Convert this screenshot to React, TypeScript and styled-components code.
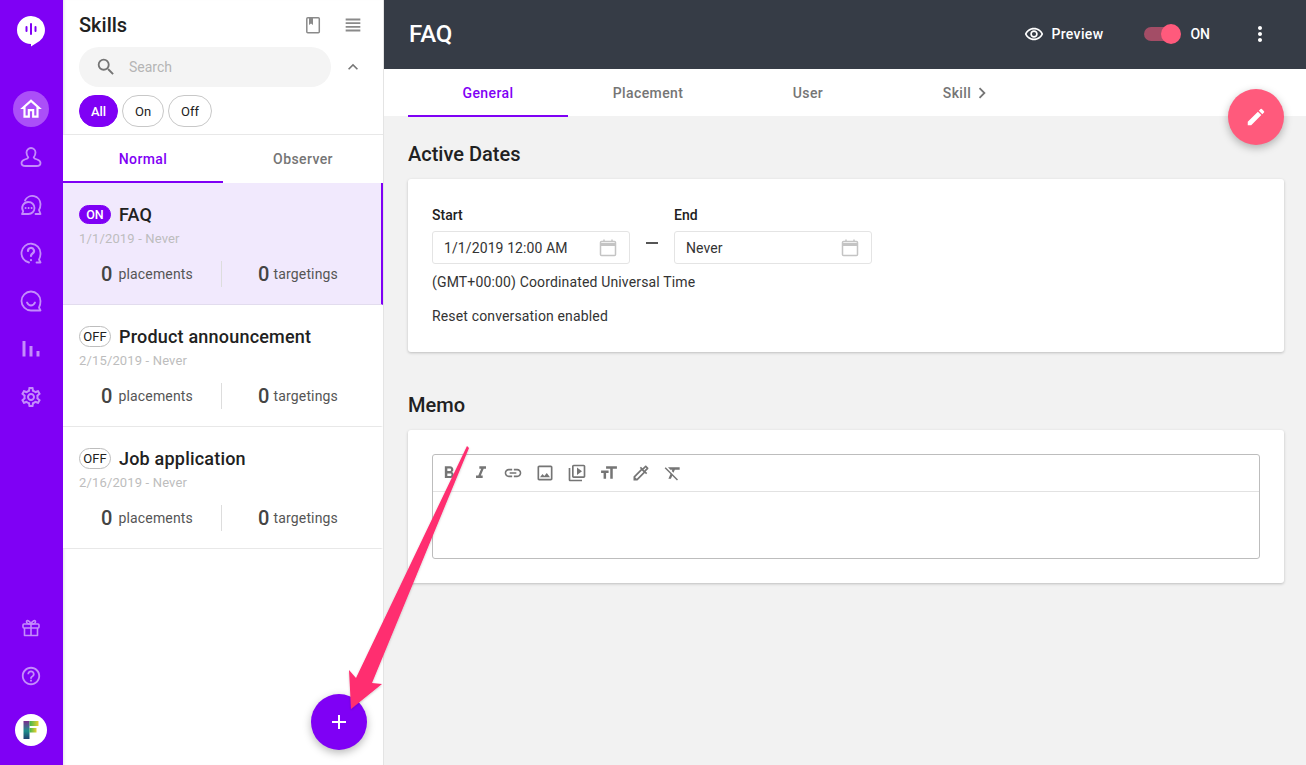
import React from 'react'
import styled, { createGlobalStyle } from 'styled-components'
import {
    MdOutlineRemoveRedEye, MdMoreVert, MdEdit, MdAdd, MdSearch, MdExpandLess, MdChevronRight,
    MdFormatBold, MdFormatItalic, MdLink, MdOutlinePhoto, MdOutlineVideoLibrary, MdTextFields,
    MdOutlineColorize, MdFormatClear, MdHelpOutline, MdOutlineSettings,
    MdOutlineHome, MdViewHeadline,
} from 'react-icons/md'

const PURPLE = '#7f00f5'
const PINK = '#ff5a7c'

const GlobalStyle = createGlobalStyle`
    html, body { margin: 0; padding: 0; height: 100%; }
    body { font-family: Roboto, "Liberation Sans", sans-serif; color: #212121; background: #f2f2f2; }
    #root { height: 100%; }
    * { box-sizing: border-box; }
`

const Page = styled.div`
    position: relative;
    display: flex;
    width: 100%;
    height: 100vh;
    overflow: hidden;
`

const Rail = styled.nav`
    width: 63px;
    flex-shrink: 0;
    background: ${PURPLE};
    display: flex;
    flex-direction: column;
    align-items: center;
    padding: 0 1px 19px 0;
`

const RailLogo = styled.div`
    height: 91px;
    padding-top: 15px;
    display: flex;
    justify-content: center;
`

const RailGroup = styled.div`
    display: flex;
    flex-direction: column;
    align-items: center;
    gap: 12px;
`

const RailSpacer = styled.div`
    flex: 1;
`

const RailButton = styled.div<{ $active?: boolean }>`
    width: 36px;
    height: 36px;
    border-radius: 50%;
    display: flex;
    align-items: center;
    justify-content: center;
    color: ${p => (p.$active ? '#fff' : '#c48cfb')};
    background: ${p => (p.$active ? '#ab4ff8' : 'transparent')};
`

const Avatar = styled.div`
    width: 32px;
    height: 32px;
    margin-top: 20px;
    border-radius: 50%;
    background: #fff;
    display: flex;
    align-items: center;
    justify-content: center;
`

const Panel = styled.section`
    position: relative;
    width: 321px;
    flex-shrink: 0;
    background: #fff;
    border-right: 1px solid #e4e4e4;
    box-shadow: inset 3px 0 3px -2px rgba(0, 0, 0, 0.1);
`

const PanelHead = styled.div`
    height: 135px;
    padding: 0 16px;
    border-bottom: 1px solid #e8e8e8;
`

const TitleRow = styled.div`
    height: 47px;
    display: flex;
    align-items: center;
    justify-content: space-between;
    padding: 4px 0 0;
    > h2 {
        margin: 0;
        font-size: 20px;
        font-weight: 500;
        position: relative;
        top: -1px;
    }
`

const TitleIcons = styled.div`
    display: flex;
    align-items: center;
    gap: 20px;
    color: #8a8a8a;
    margin-right: 3px;
    position: relative;
    top: -1px;
`

const SearchRow = styled.div`
    display: flex;
    align-items: center;
    gap: 12px;
    color: #777;
`

const SearchBox = styled.div`
    width: 252px;
    height: 40px;
    border-radius: 20px;
    background: #f4f4f4;
    display: flex;
    align-items: center;
    padding-left: 16px;
    gap: 12px;
    font-size: 14px;
    color: #b5b5b5;
`

const Chips = styled.div`
    display: flex;
    gap: 4px;
    margin-top: 8px;
`

const Chip = styled.div<{ $active?: boolean; $w: number }>`
    width: ${p => p.$w}px;
    height: 32px;
    border-radius: 16px;
    font-size: 13px;
    display: flex;
    align-items: center;
    justify-content: center;
    color: ${p => (p.$active ? '#fff' : '#212121')};
    background: ${p => (p.$active ? PURPLE : '#fff')};
    font-weight: ${p => (p.$active ? 500 : 400)};
    border: 1px solid ${p => (p.$active ? PURPLE : '#c8c8c8')};
`

const TabRow = styled.div`
    display: flex;
    background: #fff;
`

const Tab = styled.div<{ $active?: boolean; $w: number; $h: number }>`
    width: ${p => p.$w}px;
    height: ${p => p.$h}px;
    padding-top: 2px;
    display: flex;
    align-items: center;
    justify-content: center;
    font-size: 14px;
    font-weight: 500;
    letter-spacing: 0.4px;
    color: ${p => (p.$active ? PURPLE : '#757575')};
    border-bottom: 2px solid ${p => (p.$active ? PURPLE : 'transparent')};
`

const Item = styled.div<{ $active?: boolean }>`
    height: 122px;
    padding: 20px 16px 0;
    background: ${p => (p.$active ? '#f1e9fd' : '#fff')};
    border-bottom: 1px solid ${p => (p.$active ? '#e2dcee' : '#e8e8e8')};
    border-right: 2px solid ${p => (p.$active ? PURPLE : 'transparent')};
`

const ItemTitle = styled.div`
    display: flex;
    align-items: center;
    gap: 8px;
    height: 22px;
    font-size: 18px;
    font-weight: 500;
    letter-spacing: 0.2px;
`

const Badge = styled.span<{ $on?: boolean }>`
    width: 32px;
    height: ${p => (p.$on ? 19 : 21)}px;
    border-radius: 11px;
    font-size: ${p => (p.$on ? 12.5 : 13)}px;
    letter-spacing: 0;
    font-weight: ${p => (p.$on ? 500 : 400)};
    display: flex;
    align-items: center;
    justify-content: center;
    color: ${p => (p.$on ? '#fff' : '#212121')};
    background: ${p => (p.$on ? PURPLE : '#fff')};
    border: 1px solid ${p => (p.$on ? PURPLE : '#bdbdbd')};
`

const ItemDate = styled.div`
    margin-top: 6px;
    font-size: 13px;
    line-height: 16px;
    letter-spacing: 0.15px;
    color: #bdbdbd;
`

const Stats = styled.div`
    display: flex;
    margin-top: 14px;
    margin-left: -16px;
    width: 320px;
`

const Stat = styled.div<{ $first?: boolean }>`
    width: 159px;
    height: 26px;
    padding-left: ${p => (p.$first ? '38px' : '36px')};
    display: flex;
    align-items: center;
    gap: ${p => (p.$first ? '6px' : '4px')};
    font-size: 14px;
    letter-spacing: 0.15px;
    color: #555;
    border-right: ${p => (p.$first ? '1px solid #ddd' : 'none')};
    > b {
        font-size: 20px;
        font-weight: 500;
        color: #444;
    }
`

const Fab = styled.div<{ $color: string }>`
    position: absolute;
    width: 56px;
    height: 56px;
    border-radius: 50%;
    background: ${p => p.$color};
    color: #fff;
    display: flex;
    align-items: center;
    justify-content: center;
    box-shadow: 0 3px 8px rgba(0, 0, 0, 0.28);
`

const AddFab = styled(Fab)`
    right: 16px;
    bottom: 15px;
`

const EditFab = styled(Fab)`
    top: 89px;
    right: 22px;
`

const Main = styled.main`
    position: relative;
    flex: 1;
    min-width: 0;
    background: #f2f2f2;
`

const TopBar = styled.header`
    height: 69px;
    background: #363c46;
    color: #fff;
    display: flex;
    align-items: center;
    padding: 0 34px 1px 25px;
    > h1 {
        margin: 0 0 1px;
        font-size: 24px;
        font-weight: 500;
        flex: 1;
    }
`

const Preview = styled.div`
    display: flex;
    align-items: center;
    gap: 7px;
    font-size: 14px;
    font-weight: 500;
    letter-spacing: 0.35px;
    margin-right: 41px;
`

const Toggle = styled.div`
    position: relative;
    width: 34px;
    height: 14px;
    border-radius: 7px;
    background: #a34d66;
    margin-right: 12px;
    &::after {
        content: '';
        position: absolute;
        right: -3px;
        top: -3px;
        width: 20px;
        height: 20px;
        border-radius: 50%;
        background: ${PINK};
    }
`

const OnLabel = styled.span`
    font-size: 14px;
    font-weight: 500;
    margin-right: 38px;
`

const MainTabs = styled(TabRow)`
    padding-left: 24px;
    height: 47px;
`

const Content = styled.div`
    padding: 0 22px 0 24px;
`

const Heading = styled.h3<{ $top: number; $bottom: number }>`
    margin: ${p => p.$top}px 0 ${p => p.$bottom}px;
    font-size: 20px;
    line-height: 26px;
    font-weight: 500;
`

const Card = styled.div<{ $h: number }>`
    height: ${p => p.$h}px;
    background: #fff;
    border-radius: 3px;
    box-shadow: 0 1px 3px rgba(0, 0, 0, 0.22);
    padding: 24px;
`

const DateRow = styled.div`
    display: flex;
    align-items: flex-end;
    gap: 16px;
`

const DateField = styled.div`
    width: 198px;
    > label {
        display: block;
        font-size: 14px;
        line-height: 16px;
        font-weight: 500;
        margin: 4px 0 8px;
    }
`

const DateInput = styled.div`
    height: 33px;
    border: 1px solid #e4e4e4;
    border-radius: 3px;
    padding: 0 11px;
    display: flex;
    align-items: center;
    justify-content: space-between;
    font-size: 14px;
    letter-spacing: 0.1px;
    color: #333;
`

const Dash = styled.div`
    width: 12px;
    height: 2px;
    background: #555;
    margin-bottom: 20px;
`

const Note = styled.p<{ $top: number }>`
    margin: ${p => p.$top}px 0 0;
    font-size: 14px;
    line-height: 18px;
    letter-spacing: 0.15px;
    color: #333;
`

const Editor = styled.div`
    height: 105px;
    border: 1px solid #bdbdbd;
    border-radius: 3px;
`

const EditorBar = styled.div`
    height: 37px;
    border-bottom: 1px solid #e2e2e2;
    display: flex;
    align-items: center;
    gap: 12px;
    padding-left: 6px;
    color: #757575;
`

const TextSizeIcon = styled(MdTextFields)`
    transform: scaleX(-1);
`

const Arrow = styled.svg`
    position: absolute;
    left: 0;
    top: 0;
    width: 1306px;
    height: 765px;
    pointer-events: none;
`

const skills = [
    { name: 'FAQ', dates: '1/1/2019 - Never', on: true },
    { name: 'Product announcement', dates: '2/15/2019 - Never', on: false },
    { name: 'Job application', dates: '2/16/2019 - Never', on: false },
]

const LogoIcon = () => (
    <svg width="30" height="32" viewBox="0 0 30 32">
        <path d="M15 1a14 14 0 0 1 8.6 25L15 31.5 15 29A14 14 0 0 1 15 1z" fill="#fff" />
        <g stroke={PURPLE} strokeWidth="2" strokeLinecap="round">
            <path d="M15 9v10M10.5 12v4M19.5 12v4" />
        </g>
    </svg>
)

const iconProps = { width: 22, height: 22, viewBox: '0 0 22 22', fill: 'none', stroke: 'currentColor', strokeWidth: 1.8, strokeLinejoin: 'round' as const, strokeLinecap: 'round' as const }

const PersonIcon = () => (
    <svg {...iconProps}>
        <path d="M11 2a4.500 4.500 0 0 0-4.500 4.500c0 2 .8 3.600 1.800 5-.3 1-1.800 1.500-3.500 2C3 14.200 1.500 15.300 1.500 17c0 2 2 3 4 3h11c2 0 4-1 4-3 0-1.700-1.500-2.800-3.300-3.500-1.700-.5-3.200-1-3.500-2 1-1.400 1.800-3 1.800-5A4.500 4.500 0 0 0 11 2z" />
    </svg>
)

const ChatsIcon = () => (
    <svg {...iconProps}>
        <path d="M5 6.500A8.200 8.200 0 0 1 20.500 10c0 2.400-.5 4.400-1.500 6l1.500 4h-5" />
        <path d="M8.500 8a6 6 0 1 1 0 12H2l1.200-2.700A6 6 0 0 1 8.500 8z" />
        <path d="M5.500 14h.2M8.500 14h.2M11.500 14h.2" />
    </svg>
)

const QuestionIcon = () => (
    <svg {...iconProps}>
        <path d="M9 20.500A9.500 9.500 0 1 1 20.500 11c0 2.500-.5 5-1.500 6.500l1.500 3h-4" />
        <path d="M8 9a3 3 0 1 1 4.500 2.500c-1 .6-1.500 1.200-1.500 2.500M11 18v.2" strokeWidth="2.200" />
    </svg>
)

const SmileIcon = () => (
    <svg {...iconProps}>
        <path d="M11 20.500A9.500 9.500 0 1 1 20.500 11c0 2.500-.5 5-1.500 6.500l1.500 3z" />
        <path d="M7 12.500c1 2 2.500 3 4 3s3-1 4-3" />
    </svg>
)

const BarsIcon = () => (
    <svg width="22" height="22" viewBox="0 0 22 22" fill="currentColor">
        <rect x="2.500" y="3" width="3" height="15.500" />
        <rect x="9.500" y="8" width="3" height="10.500" />
        <rect x="16.500" y="13" width="3" height="5.500" />
    </svg>
)

const GiftIcon = () => (
    <svg width="20" height="20" viewBox="0 0 20 20" fill="none" stroke="currentColor" strokeWidth="1.600" strokeLinejoin="round">
        <rect x="2" y="6" width="16" height="4" rx="1" />
        <path d="M3.500 10v7.500h13V10M10 6v11.500" />
        <path d="M10 6C8 6 5.500 5.500 5.500 3.700 5.500 2 8.500 2 10 6zM10 6c2 0 4.500-.5 4.500-2.300C14.500 2 11.500 2 10 6z" />
    </svg>
)

const BookIcon = () => (
    <svg width="18" height="20" viewBox="0 0 18 20" fill="none" stroke="currentColor" strokeWidth="1.500">
        <rect x="2.800" y="2.800" width="12.500" height="15" rx="1" />
        <path d="M5 3v7l2-1.500L9 10V3" fill="currentColor" stroke="none" />
    </svg>
)

const CalendarIcon = () => (
    <svg width="20" height="20" viewBox="0 0 20 20" fill="none" stroke="#c4c4c4" strokeWidth="1.500">
        <rect x="2.500" y="3.500" width="15" height="14" rx="1" />
        <path d="M2.500 6.500h15" strokeWidth="3" />
        <path d="M6 1.500v2M14 1.500v2" />
    </svg>
)

const FLogo = () => (
    <svg width="18" height="20" viewBox="0 0 18 20">
        <defs>
            <linearGradient id="stem" x1="0" y1="0" x2="0" y2="1">
                <stop offset="0" stopColor="#7b2d8e" />
                <stop offset="0.55" stopColor="#1d8f8c" />
                <stop offset="1" stopColor="#22406f" />
            </linearGradient>
            <linearGradient id="bar" x1="0" y1="0" x2="1" y2="0">
                <stop offset="0" stopColor="#3fb54f" />
                <stop offset="1" stopColor="#e8d02e" />
            </linearGradient>
        </defs>
        <rect x="1.500" y="1" width="6" height="18" fill="url(#stem)" />
        <rect x="7.500" y="1" width="9" height="5" fill="url(#bar)" />
        <rect x="7.500" y="8" width="7" height="4.500" fill="url(#bar)" />
    </svg>
)

const App: React.FC = () => {
    return (
        <Page>
            <GlobalStyle />
            <Rail>
                <RailLogo><LogoIcon /></RailLogo>
                <RailGroup>
                    <RailButton $active><MdOutlineHome size={26} /></RailButton>
                    <RailButton><PersonIcon /></RailButton>
                    <RailButton><ChatsIcon /></RailButton>
                    <RailButton><QuestionIcon /></RailButton>
                    <RailButton><SmileIcon /></RailButton>
                    <RailButton><BarsIcon /></RailButton>
                    <RailButton><MdOutlineSettings size={24} /></RailButton>
                </RailGroup>
                <RailSpacer />
                <RailGroup>
                    <RailButton><GiftIcon /></RailButton>
                    <RailButton><MdHelpOutline size={22} /></RailButton>
                </RailGroup>
                <Avatar><FLogo /></Avatar>
            </Rail>

            <Panel>
                <PanelHead>
                    <TitleRow>
                        <h2>Skills</h2>
                        <TitleIcons>
                            <BookIcon />
                            <MdViewHeadline size={22} />
                        </TitleIcons>
                    </TitleRow>
                    <SearchRow>
                        <SearchBox>
                            <MdSearch size={22} color="#757575" />
                            Search
                        </SearchBox>
                        <MdExpandLess size={20} />
                    </SearchRow>
                    <Chips>
                        <Chip $active $w={39}>All</Chip>
                        <Chip $w={42}>On</Chip>
                        <Chip $w={44}>Off</Chip>
                    </Chips>
                </PanelHead>
                <TabRow>
                    <Tab $active $w={160} $h={48}>Normal</Tab>
                    <Tab $w={160} $h={48}>Observer</Tab>
                </TabRow>
                {skills.map(skill => (
                    <Item key={skill.name} $active={skill.on}>
                        <ItemTitle>
                            <Badge $on={skill.on}>{skill.on ? 'ON' : 'OFF'}</Badge>
                            {skill.name}
                        </ItemTitle>
                        <ItemDate>{skill.dates}</ItemDate>
                        <Stats>
                            <Stat $first><b>0</b> placements</Stat>
                            <Stat><b>0</b> targetings</Stat>
                        </Stats>
                    </Item>
                ))}
                <AddFab $color={PURPLE}><MdAdd size={24} /></AddFab>
            </Panel>

            <Main>
                <TopBar>
                    <h1>FAQ</h1>
                    <Preview><MdOutlineRemoveRedEye size={20} /> Preview</Preview>
                    <Toggle />
                    <OnLabel>ON</OnLabel>
                    <MdMoreVert size={24} />
                </TopBar>
                <MainTabs>
                    <Tab $active $w={160} $h={48}>General</Tab>
                    <Tab $w={160} $h={48}>Placement</Tab>
                    <Tab $w={160} $h={48}>User</Tab>
                    <Tab $w={160} $h={48}>Skill <MdChevronRight size={22} /></Tab>
                </MainTabs>
                <EditFab $color={PINK}><MdEdit size={22} /></EditFab>
                <Content>
                    <Heading $top={25} $bottom={12}>Active Dates</Heading>
                    <Card $h={173}>
                        <DateRow>
                            <DateField>
                                <label>Start</label>
                                <DateInput>1/1/2019 12:00 AM <CalendarIcon /></DateInput>
                            </DateField>
                            <Dash />
                            <DateField>
                                <label>End</label>
                                <DateInput>Never <CalendarIcon /></DateInput>
                            </DateField>
                        </DateRow>
                        <Note $top={9}>(GMT+00:00) Coordinated Universal Time</Note>
                        <Note $top={16}>Reset conversation enabled</Note>
                    </Card>
                    <Heading $top={40} $bottom={12}>Memo</Heading>
                    <Card $h={153}>
                        <Editor>
                            <EditorBar>
                                <MdFormatBold size={20} />
                                <MdFormatItalic size={20} />
                                <MdLink size={20} />
                                <MdOutlinePhoto size={20} />
                                <MdOutlineVideoLibrary size={20} />
                                <TextSizeIcon size={20} />
                                <MdOutlineColorize size={20} />
                                <MdFormatClear size={20} />
                            </EditorBar>
                        </Editor>
                    </Card>
                </Content>
            </Main>

            <Arrow viewBox="0 0 1306 765">
                <defs>
                    <filter id="arrowShadow" x="-20%" y="-20%" width="140%" height="140%">
                        <feDropShadow dx="0" dy="1" stdDeviation="1" floodColor="#000" floodOpacity="0.2" />
                    </filter>
                </defs>
                <path
                    d="M467 446 L469 448 L372 683 L382 684 L351 709 L349 670 L356 678 Z"
                    fill="#ff2d6f"
                    filter="url(#arrowShadow)"
                />
            </Arrow>
        </Page>
    )
}

export default App
